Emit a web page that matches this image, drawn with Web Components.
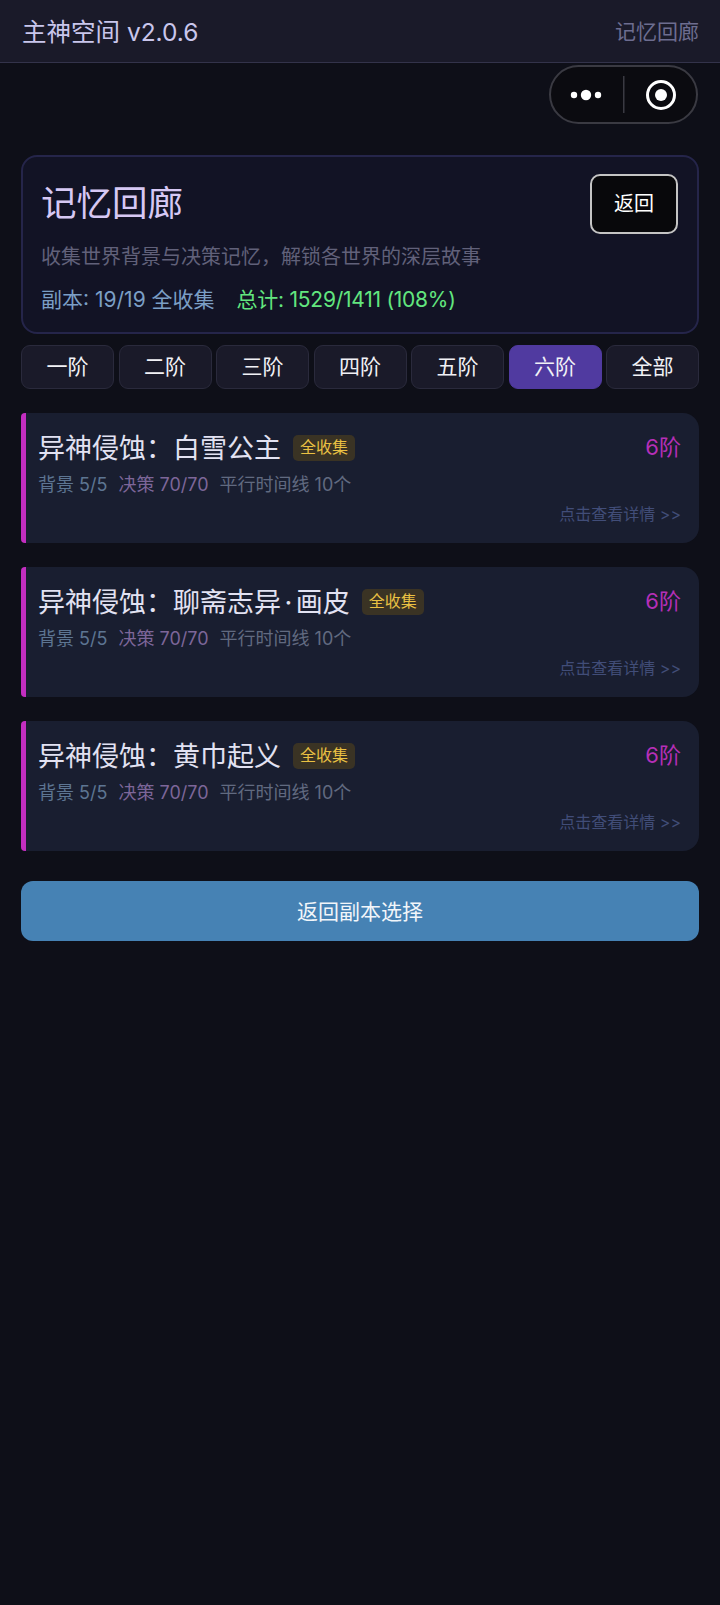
<!DOCTYPE html>
<html lang="zh">
<head>
<meta charset="utf-8">
<title>记忆回廊</title>
<style>
  html, body { margin: 0; background: #0e0f18; }
  body { font-family: Inter, "Noto Sans CJK SC", sans-serif; min-height: 1605px; position: relative; }
</style>
</head>
<body>
<app-header title-text="主神空间 v2.0.6" page="记忆回廊"></app-header>
<capsule-menu></capsule-menu>
<main-page>
  <hero-panel heading="记忆回廊" sub="收集世界背景与决策记忆，解锁各世界的深层故事" stat="副本: 19/19 全收集" total="总计: 1529/1411 (108%)"></hero-panel>
  <tier-tabs active="六阶"></tier-tabs>
  <world-card name="异神侵蚀：白雪公主"></world-card>
  <world-card name="异神侵蚀：聊斋志异·画皮"></world-card>
  <world-card name="异神侵蚀：黄巾起义"></world-card>
  <wide-button>返回副本选择</wide-button>
</main-page>

<script>
class AppHeader extends HTMLElement {
  connectedCallback() {
    this.attachShadow({ mode: "open" });
    this.shadowRoot.innerHTML = `
      <style>
        :host {
          display: flex;
          align-items: center;
          justify-content: space-between;
          box-sizing: border-box;
          height: 63px;
          padding: 0 21px 2px 22px;
          background: #1a1a29;
          border-bottom: 1px solid #33334a;
        }
        .t { font-size: 24.5px; color: #c9c6ec; }
        .p { font-size: 21px; color: #6d6d90; }
      </style>
      <span class="t">${this.getAttribute("title-text")}</span>
      <span class="p">${this.getAttribute("page")}</span>
    `;
  }
}

// the wechat style capsule, it floats over the page
class CapsuleMenu extends HTMLElement {
  connectedCallback() {
    this.attachShadow({ mode: "open" });
    this.shadowRoot.innerHTML = `
      <style>
        :host {
          position: absolute;
          top: 65px;
          left: 549px;
          width: 149px;
          height: 59px;
          box-sizing: border-box;
          display: block;
          border: 2px solid #3a3a42;
          border-radius: 30px;
          background: #0b0b10;
        }
        svg { display: block; position: absolute; left: -2px; top: -2px; }
      </style>
      <svg width="149" height="59" viewBox="0 0 149 59">
        <circle cx="25" cy="30" r="3.2" fill="#fff"/>
        <circle cx="37" cy="30" r="5.2" fill="#fff"/>
        <circle cx="49" cy="30" r="3.2" fill="#fff"/>
        <rect x="74" y="11" width="1.5" height="37" fill="#3a3a42"/>
        <circle cx="112" cy="30" r="13.5" fill="none" stroke="#fff" stroke-width="3"/>
        <circle cx="112" cy="30" r="6" fill="#fff"/>
      </svg>
    `;
  }
}

class MainPage extends HTMLElement {
  connectedCallback() {
    this.attachShadow({ mode: "open" });
    this.shadowRoot.innerHTML = `
      <style>
        :host {
          display: flex;
          flex-direction: column;
          padding: 92px 21px 0;
        }
      </style>
      <slot></slot>
    `;
  }
}

class HeroPanel extends HTMLElement {
  connectedCallback() {
    this.attachShadow({ mode: "open" });
    this.shadowRoot.innerHTML = `
      <style>
        :host {
          display: block;
          box-sizing: border-box;
          height: 179px;
          padding: 17px 19px 0 18px;
          background: #121325;
          border: 2px solid #25254a;
          border-radius: 16px;
        }
        .top { display: flex; justify-content: space-between; align-items: flex-start; }
        h1 { margin: 8px 0 0; font-size: 35.5px; line-height: 44px; font-weight: 400; color: #d6c8f4; }
        button {
          width: 88px;
          height: 60px;
          padding: 0 0 3px;
          font: inherit;
          font-size: 20px;
          color: #fff;
          background: #08080b;
          border: 2px solid #c4c4c4;
          border-radius: 10px;
        }
        .sub { margin-top: 8px; font-size: 20px; line-height: 30px; color: #61617a; }
        .stats { display: flex; gap: 22px; margin-top: 13px; font-size: 21px; line-height: 30px; }
        .a { color: #7b9fc5; }
        .b { color: #62e67f; letter-spacing: -0.25px; }
      </style>
      <div class="top">
        <h1>${this.getAttribute("heading")}</h1>
        <button>返回</button>
      </div>
      <div class="sub">${this.getAttribute("sub")}</div>
      <div class="stats">
        <span class="a">${this.getAttribute("stat")}</span>
        <span class="b">${this.getAttribute("total")}</span>
      </div>
    `;
  }
}

class TierTabs extends HTMLElement {
  connectedCallback() {
    this.attachShadow({ mode: "open" });
    const names = ["一阶", "二阶", "三阶", "四阶", "五阶", "六阶", "全部"];
    const active = this.getAttribute("active");
    this.shadowRoot.innerHTML = `
      <style>
        :host {
          display: grid;
          grid-template-columns: repeat(7, 1fr);
          gap: 4.5px;
          margin-top: 11px;
          margin-bottom: 24px;
        }
        div {
          display: flex;
          align-items: center;
          justify-content: center;
          box-sizing: border-box;
          height: 44px;
          padding-bottom: 4px;
          font-size: 21px;
          color: #f1f1f6;
          background: #1a1a29;
          border: 1.5px solid #2a2a3c;
          border-radius: 9px;
        }
        .on { background: #503aa0; border-color: #503aa0; }
      </style>
      ${names.map(n => `<div class="${n === active ? "on" : ""}">${n}</div>`).join("")}
    `;
  }
}

class WorldCard extends HTMLElement {
  connectedCallback() {
    this.attachShadow({ mode: "open" });
    // the middle dot is wider in the reference than in the latin font
    const name = this.getAttribute("name").replace("·", `<span class="dot">·</span>`);
    this.shadowRoot.innerHTML = `
      <style>
        :host {
          display: block;
          box-sizing: border-box;
          height: 130px;
          margin-bottom: 24px;
          padding: 17px 18px 0 12px;
          background: #191e30;
          border-left: 5px solid #c32ec0;
          border-radius: 4px 16px 16px 4px;
        }
        .row { display: flex; align-items: center; height: 36px; }
        .name { font-size: 27px; line-height: 36px; padding-top: 1px; color: #e2e2f2; }
        .dot { padding: 0 3.5px; }
        .badge {
          margin-left: 12px;
          padding: 0 7px;
          height: 26px;
          line-height: 25px;
          font-size: 16px;
          color: #eac143;
          background: #3a3324;
          border-radius: 5px;
        }
        .tier { margin-left: auto; font-size: 22px; line-height: 36px; padding-bottom: 2px; color: #b52fb7; }
        .meta { display: flex; gap: 11px; margin-top: 5px; font-size: 18px; line-height: 28px; color: #616a80; }
        .bg { color: #5d7592; }
        .dec { color: #7d6699; }
        .hint { margin-top: 2px; text-align: right; font-size: 16px; line-height: 26px; color: #414d78; }
      </style>
      <div class="row">
        <span class="name">${name}</span>
        <span class="badge">全收集</span>
        <span class="tier">6阶</span>
      </div>
      <div class="meta">
        <span class="bg">背景 5/5</span>
        <span class="dec">决策 70/70</span>
        <span>平行时间线 10个</span>
      </div>
      <div class="hint">点击查看详情 &gt;&gt;</div>
    `;
  }
}

class WideButton extends HTMLElement {
  connectedCallback() {
    this.attachShadow({ mode: "open" });
    this.shadowRoot.innerHTML = `
      <style>
        :host {
          display: flex;
          align-items: center;
          justify-content: center;
          box-sizing: border-box;
          height: 60px;
          margin-top: 6px;
          padding-bottom: 3px;
          font-size: 21px;
          color: #f2f6fa;
          background: #4682b4;
          border-radius: 12px;
        }
      </style>
      <slot></slot>
    `;
  }
}

customElements.define("app-header", AppHeader);
customElements.define("capsule-menu", CapsuleMenu);
customElements.define("main-page", MainPage);
customElements.define("hero-panel", HeroPanel);
customElements.define("tier-tabs", TierTabs);
customElements.define("world-card", WorldCard);
customElements.define("wide-button", WideButton);
</script>
</body>
</html>
